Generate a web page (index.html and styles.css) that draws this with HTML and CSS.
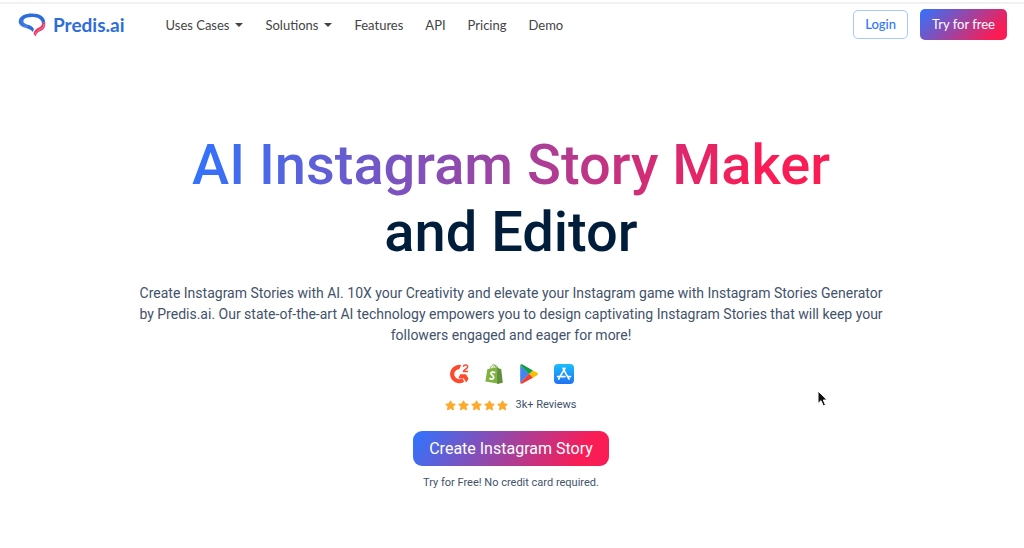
FILE: index.html
```html
<!DOCTYPE html>
<html lang="en">
<head>
<meta charset="utf-8">
<meta name="viewport" content="width=device-width, initial-scale=1">
<title>AI Instagram Story Maker and Editor - Predis.ai</title>
<link rel="stylesheet" href="styles.css">
</head>
<body>
<header class="topbar">
  <a class="brand" href="#">
    <svg class="brand-mark" viewBox="0 0 28 24" aria-hidden="true">
      <path d="M14.500 19 C12.500 15.800 9.200 15.700 6.600 14.600 C2 12.700 .3 10.600 .8 7.700 C1.600 3.200 7 .6 14 .6 C21.500 .6 27 4 27.200 9.200 L24 10.200 C23.500 5.900 19.500 3.900 14 3.900 C9.500 3.900 6.500 4.700 5.500 7 C4.700 9.500 6.800 11 10 11.800 C13.400 12.700 15.700 14.300 16 16.600Z" fill="#2c6ddb"/>
      <path d="M1 9.500 C2 12.300 5 13.500 9 14.300 M3 6.500 C3 10.500 6.500 12.200 10 13.300" fill="none" stroke="#79a6f0" stroke-width=".5"/>
      <path d="M27.200 9.200 C27.900 13.500 25.700 16.900 21.900 18.300 C19.700 19.200 18.500 20.700 17.500 23.400 L15.500 20.700 C16.200 17.500 17.800 15.900 20.400 14.800 C22.800 13.800 23.900 12.500 24 10.200Z" fill="#e23562"/>
      <path d="M26 11 C25.700 14.700 23.500 16 21 17 C18.700 18 17.700 19.500 17 21.700" fill="none" stroke="#f6b5c6" stroke-width=".6"/>
    </svg>
    <span>Predis.ai</span>
  </a>
  <nav class="menu" aria-label="Main">
    <button class="menu-item" type="button">Uses Cases <i class="caret"></i></button>
    <button class="menu-item" type="button">Solutions <i class="caret"></i></button>
    <a class="menu-item" href="#">Features</a>
    <a class="menu-item" href="#">API</a>
    <a class="menu-item" href="#">Pricing</a>
    <a class="menu-item" href="#">Demo</a>
  </nav>
  <div class="account">
    <button class="btn btn-outline" type="button">Login</button>
    <button class="btn btn-gradient" type="button">Try for free</button>
  </div>
</header>
<main class="hero">
  <h1 class="title"><span class="title-gradient">AI Instagram Story Maker</span><span class="title-dark">and Editor</span></h1>
  <p class="lead">Create Instagram Stories with AI. 10X your Creativity and elevate your Instagram game with Instagram Stories Generator by Predis.ai. Our state-of-the-art AI technology empowers you to design captivating Instagram Stories that will keep your followers engaged and eager for more!</p>
  <div class="platforms">
    <svg viewBox="0 0 20 20" role="img" aria-label="G2">
      <path d="M12.200 1 A9.200 9.200 0 1 0 15.300 17.700 L13.300 14.200 A5 5 0 1 1 10.200 5.200Z" fill="#ff492c"/>
      <path d="M11.200 10.300 H16.900 L19.600 14.800 L17.200 18.500 L14.900 14.400 H9.300Z" fill="#ff492c"/>
      <path d="M14.300 2.900 C14.700 .4 18.900 .5 18.700 2.900 C18.600 4.700 14.600 5.500 14.500 7.600 H19.100" fill="none" stroke="#ff492c" stroke-width="1.500"/>
    </svg>
    <svg viewBox="0 0 20 20" role="img" aria-label="Shopify">
      <path d="M3.300 5.200 L14 3 L15 19.800 L1.400 17.400Z" fill="#80b341"/>
      <path d="M13.300 3.300 L15.600 4.800 L17.200 5 L18.800 18.700 L13.100 19.900Z" fill="#5e8e3e"/>
      <path d="M6 5.400 C6.600 2.400 8.400 .6 10 .7 C11.700 .9 12 3 12 4.200 M8.700 4.700 C9.300 2.500 10.700 1.100 12 1.500 C13 1.900 13.300 3 13.400 4" fill="none" stroke="#79a83f" stroke-width=".9"/>
      <path d="M11.200 8.600 C8.800 7.500 6.800 8.300 7 9.700 C7.200 11.200 10.100 11.600 9.700 13.700 C9.300 15.600 7 15.300 5.400 14.200" fill="none" stroke="#fff" stroke-width="1.800"/>
    </svg>
    <svg viewBox="0 0 20 20" role="img" aria-label="Google Play">
      <path d="M1.200 1.200 V18.800 L10 10Z" fill="#4285f4"/>
      <path d="M1.200 1.200 Q1.700 -.4 3.500 .5 L14 6.400 L10 10.200Z" fill="#109e48"/>
      <path d="M14 6.400 L18.500 9 Q19.900 10 18.500 11 L14 13.700 L10 10Z" fill="#fbbc04"/>
      <path d="M1.200 18.800 Q1.800 20.400 3.500 19.500 L14 13.700 L10 9.800Z" fill="#ea4335"/>
    </svg>
    <svg viewBox="0 0 20 20" role="img" aria-label="App Store">
      <defs><linearGradient id="store" x2="0" y2="1"><stop stop-color="#18bffb"/><stop offset="1" stop-color="#2072f3"/></linearGradient></defs>
      <rect width="20" height="20" rx="4" fill="url(#store)"/>
      <path d="M9 4.200 L9.900 5.800 M11.100 4.200 L5.700 13 M10.200 6.700 L15 15.200 M3.500 12.600 H11 M14 12.600 H16.500 M5.200 14.300 L4.700 15.200" fill="none" stroke="#fff" stroke-width="1.600" stroke-linecap="round"/>
    </svg>
  </div>
  <div class="reviews">
    <svg class="stars" viewBox="0 0 63 11" role="img" aria-label="5 out of 5 stars">
      <defs><path id="star" d="M5.500 .8 L7 3.800 L10.300 4.300 L7.900 6.600 L8.500 9.900 L5.500 8.300 L2.500 9.900 L3.100 6.600 L.7 4.300 L4 3.800Z" fill="#fda929" stroke="#fda929" stroke-width="1" stroke-linejoin="round"/></defs>
      <use href="#star"/><use href="#star" x="13"/><use href="#star" x="26"/><use href="#star" x="39"/><use href="#star" x="52"/>
    </svg>
    <span>3k+ Reviews</span>
  </div>
  <button class="cta" type="button">Create Instagram Story</button>
  <p class="note">Try for Free! No credit card required.</p>
  <svg class="pointer" viewBox="0 0 12 18" aria-hidden="true">
    <path d="M1 1 V13.500 L4 10.700 L6.300 16 L8.500 15 L6.300 10 H10.200Z" fill="#111" stroke="#fff" stroke-width="1"/>
  </svg>
</main>
</body>
</html>
```
FILE: styles.css
```css
* {
  box-sizing: border-box;
}

body {
  margin: 0;
  padding-top: 2px;
  background: #fff;
  color: #42526b;
  font-family: "Roboto", "Liberation Sans", sans-serif;
}

button {
  font: inherit;
  cursor: pointer;
}

.topbar {
  display: flex;
  align-items: center;
  padding: 5px 17px 8px 18px;
  border-top: 2px solid #f1f1f1;
  font-family: "Lato", "Liberation Sans", sans-serif;
}

.brand {
  display: flex;
  align-items: center;
  gap: 7px;
  color: #2c6ddb;
  font-size: 19px;
  line-height: 24px;
  font-weight: 700;
  text-decoration: none;
}

.brand-mark {
  width: 28px;
  height: 24px;
}

.menu {
  display: flex;
  gap: 22px;
  margin-left: 41px;
}

.menu-item {
  display: flex;
  align-items: center;
  gap: 6px;
  padding: 0;
  border: 0;
  background: none;
  color: #444;
  font-size: 13px;
  line-height: 20px;
  font-weight: 400;
  text-decoration: none;
}

.caret {
  border: 4px solid transparent;
  border-top-color: #444;
  border-bottom: 0;
}

.account {
  display: flex;
  align-items: center;
  gap: 12px;
  margin-left: auto;
}

.btn {
  padding: 4px 11px;
  border-radius: 5px;
  font-size: 13px;
  line-height: 19px;
}

.btn-outline {
  border: 1px solid #a9c7ff;
  background: #fff;
  color: #2e75fb;
  font-weight: 500;
}

.btn-gradient {
  padding: 6px 12px;
  border: 0;
  background: linear-gradient(135deg, #2f74ff, #f91c55 85%);
  color: #fff;
}

.hero {
  position: relative;
  display: flex;
  flex-direction: column;
  align-items: center;
  padding: 84px 26px 50px 24px;
  text-align: center;
}

.title {
  display: flex;
  flex-direction: column;
  align-items: center;
  margin: 0 0 17px;
  font-size: 56px;
  line-height: 67px;
  font-weight: 500;
}

.title-gradient {
  background: linear-gradient(100deg, #2f74ff, #f91c55 88%);
  background-clip: text;
  color: transparent;
}

.title-dark {
  color: #001e3c;
}

.lead {
  max-width: 750px;
  margin: 0 0 18px;
  font-size: 14px;
  line-height: 21px;
}

.platforms {
  display: flex;
  gap: 15px;
  margin-bottom: 13px;
}

.platforms svg {
  width: 20px;
  height: 20px;
}

.reviews {
  display: flex;
  align-items: center;
  gap: 7px;
  margin-bottom: 18px;
  font-size: 11px;
  line-height: 16px;
}

.stars {
  width: 63px;
  height: 11px;
}

.cta {
  padding: 7px 16px;
  border: 0;
  border-radius: 9px;
  background: linear-gradient(120deg, #2f74ff, #f91c55 85%);
  color: #fff;
  font-size: 16px;
  line-height: 21px;
}

.note {
  margin: 9px 0 0;
  font-size: 11px;
  line-height: 16px;
}

.pointer {
  position: absolute;
  top: 342px;
  left: 80%;
  width: 12px;
  height: 18px;
  margin-left: -2px;
}
```
